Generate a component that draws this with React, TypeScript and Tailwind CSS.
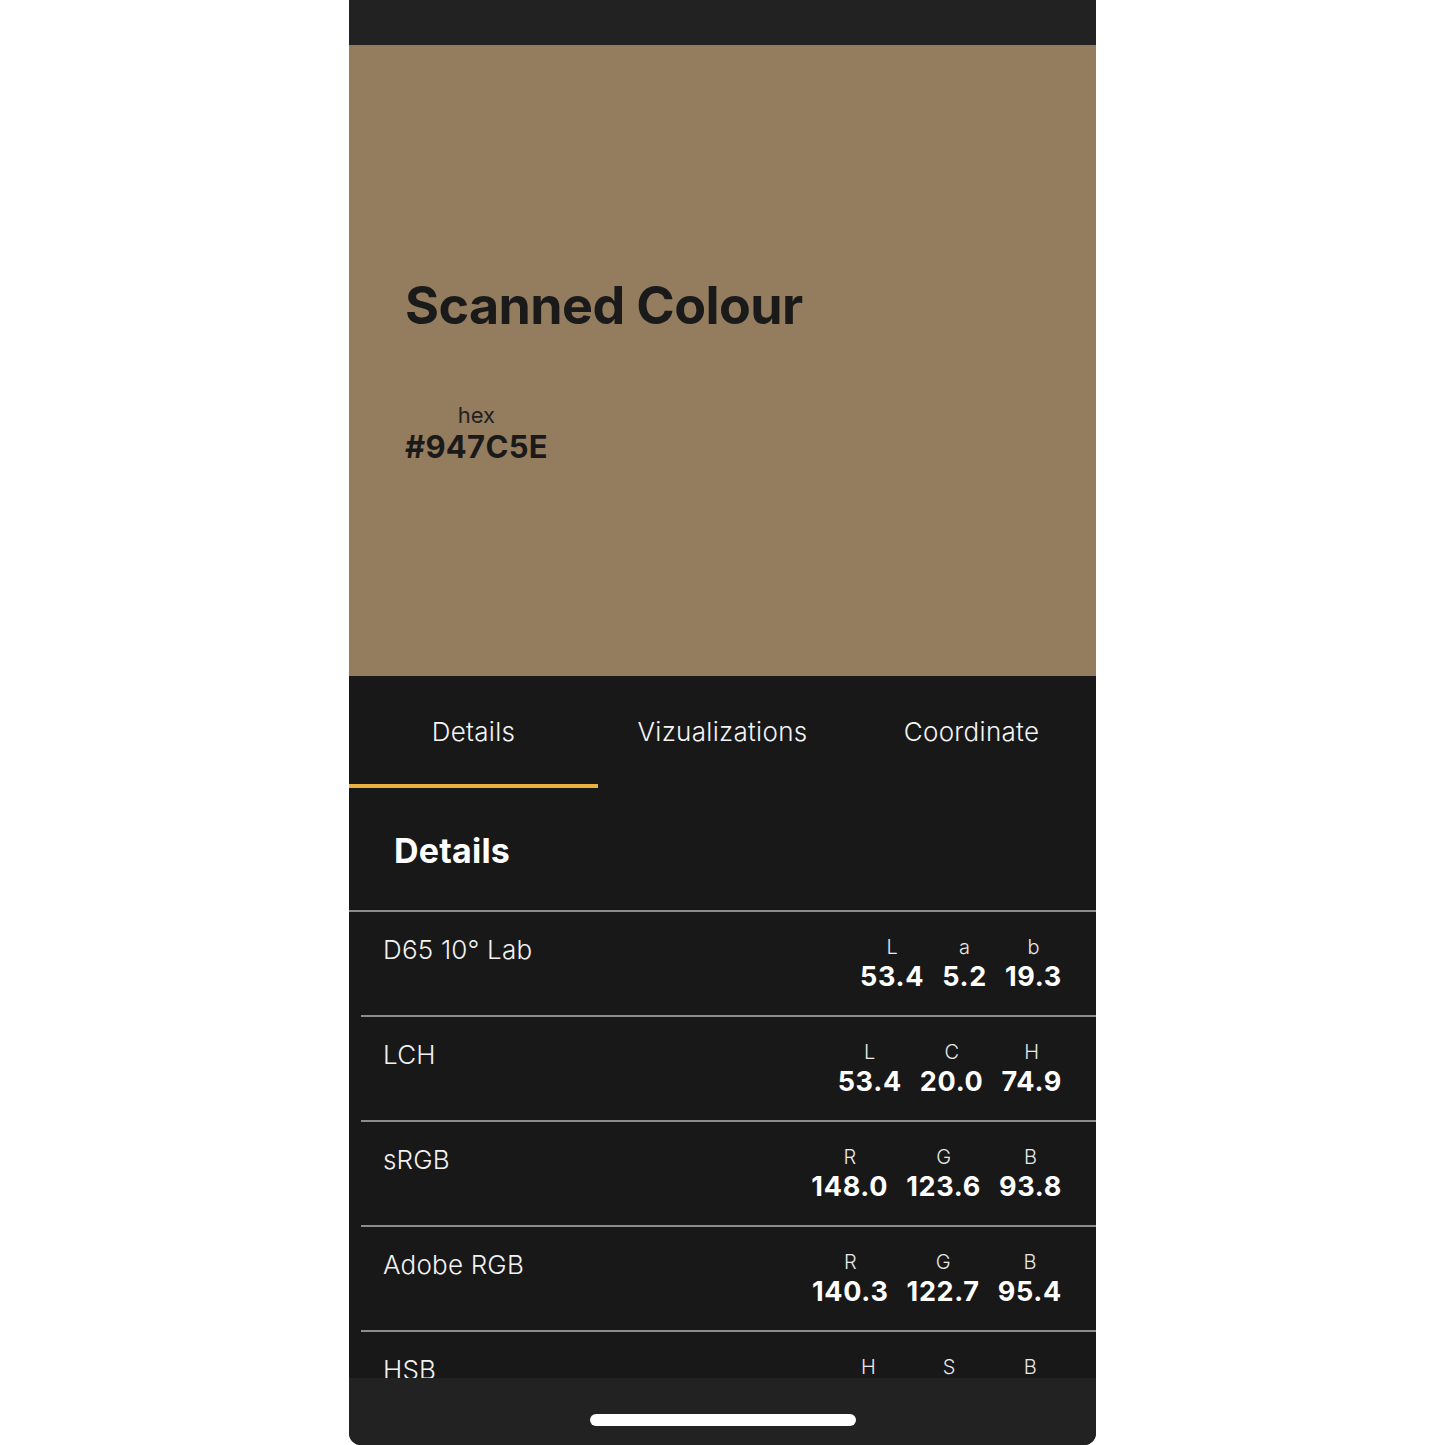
import React from "react";

type Row = {
  name: string;
  cols: { key: string; value: string }[];
};

const rows: Row[] = [
  {
    name: "D65 10° Lab",
    cols: [
      { key: "L", value: "53.4" },
      { key: "a", value: "5.2" },
      { key: "b", value: "19.3" },
    ],
  },
  {
    name: "LCH",
    cols: [
      { key: "L", value: "53.4" },
      { key: "C", value: "20.0" },
      { key: "H", value: "74.9" },
    ],
  },
  {
    name: "sRGB",
    cols: [
      { key: "R", value: "148.0" },
      { key: "G", value: "123.6" },
      { key: "B", value: "93.8" },
    ],
  },
  {
    name: "Adobe RGB",
    cols: [
      { key: "R", value: "140.3" },
      { key: "G", value: "122.7" },
      { key: "B", value: "95.4" },
    ],
  },
  {
    name: "HSB",
    cols: [
      { key: "H", value: "33.8" },
      { key: "S", value: "36.6" },
      { key: "B", value: "58.0" },
    ],
  },
];

const tabs = ["Details", "Vizualizations", "Coordinate"];

function ValueRow({ row }: { row: Row }) {
  return (
    <div className="ml-[12px] border-b-2 border-[#8c8c8c] h-[105px] flex justify-between pl-[22px] pr-[34px] pt-[22px]">
      <div className="text-[26px] leading-[32px] font-light text-[#f2f2f2] tracking-[0.2px]">
        {row.name}
      </div>
      <div className="flex gap-[18px]">
        {row.cols.map((c) => (
          <div key={c.key + c.value} className="flex flex-col items-center">
            <div className="text-[20px] leading-[26px] font-light text-[#e8e8e8]">{c.key}</div>
            <div className="text-[27px] leading-[34px] font-bold text-white tracking-[0.7px]">
              {c.value}
            </div>
          </div>
        ))}
      </div>
    </div>
  );
}

export default function App() {
  return (
    <div
      className="min-h-screen bg-white flex justify-center"
      style={{ fontFamily: "Inter, 'Liberation Sans', sans-serif" }}
    >
      <div className="w-[747px] h-[1445px] flex flex-col bg-[#181818] rounded-b-[12px] overflow-hidden">
        {/* status bar strip */}
        <div className="h-[45px] shrink-0 bg-[#222222]" />

        {/* swatch */}
        <div className="h-[631px] shrink-0 bg-[#947C5E] pl-[56px] pt-[231px] text-[#1a1a1a]">
          <h1 className="text-[52px] leading-[60px] font-bold tracking-[-0.6px]">Scanned Colour</h1>
          <div className="mt-[66px] inline-flex flex-col items-center">
            <div className="text-[22px] leading-[26px] font-normal text-[#1f1f1f]">hex</div>
            <div className="text-[31px] leading-[38px] font-bold tracking-[0.3px]">#947C5E</div>
          </div>
        </div>

        {/* tabs */}
        <div className="h-[112px] shrink-0 grid grid-cols-3">
          {tabs.map((t, i) => (
            <div key={t} className="relative flex items-center justify-center pb-[2px]">
              <span className="text-[26px] font-light text-[#f4f4f4] tracking-[0.3px]">{t}</span>
              {i === 0 && (
                <div className="absolute left-0 right-0 bottom-0 h-[4px] bg-[#E9B23B]" />
              )}
            </div>
          ))}
        </div>

        {/* details list */}
        <div className="flex-1 overflow-hidden">
          <div className="h-[124px] border-b-2 border-[#8c8c8c] pl-[45px] pt-[3px] flex items-center">
            <h2 className="text-[34px] font-bold text-white tracking-[0.2px]">Details</h2>
          </div>
          {rows.map((r) => (
            <ValueRow key={r.name} row={r} />
          ))}
        </div>

        {/* home indicator bar */}
        <div className="h-[67px] shrink-0 bg-[#222222] flex justify-center pt-[36px]">
          <div className="w-[266px] h-[12px] rounded-full bg-white" />
        </div>
      </div>
    </div>
  );
}
